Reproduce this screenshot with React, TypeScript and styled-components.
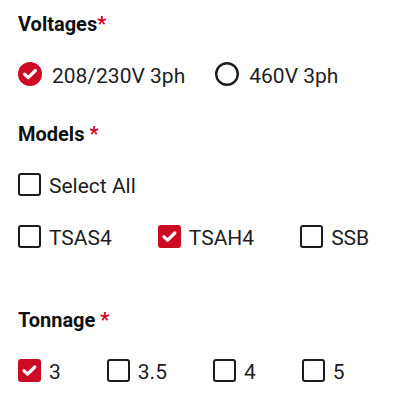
import * as React from "react";
import styled, { createGlobalStyle } from "styled-components";

const voltages = ["208/230V 3ph", "460V 3ph"];
const models = ["TSAS4", "TSAH4", "SSB"];
const tonnages = ["3", "3.5", "4", "5"];

const RadioIcon = ({ checked }: { checked: boolean }) =>
  checked ? (
    <svg width="24" height="24" viewBox="0 0 24 24">
      <circle cx="12" cy="12" r="12" fill="#cc0a24" />
      <path
        d="M6.6 12.2l3.6 3.5 7.2-7.2"
        fill="none"
        stroke="#fff"
        strokeWidth="3.2"
        strokeLinecap="round"
        strokeLinejoin="round"
      />
    </svg>
  ) : (
    <svg width="24" height="24" viewBox="0 0 24 24">
      <circle cx="12" cy="12" r="10.8" fill="none" stroke="#1c1c1c" strokeWidth="2.4" />
    </svg>
  );

const CheckIcon = () => (
  <svg width="23" height="23" viewBox="0 0 23 23">
    <rect width="23" height="23" rx="3" fill="#cc0a24" />
    <path
      d="M6 11.8l3.6 3.4 7.2-7.2"
      fill="none"
      stroke="#fff"
      strokeWidth="3.2"
      strokeLinecap="round"
      strokeLinejoin="round"
    />
  </svg>
);

const App = () => {
  const [voltage, setVoltage] = React.useState(voltages[0]);
  const [picked, setPicked] = React.useState<string[]>(["TSAH4"]);
  const [tons, setTons] = React.useState<string[]>(["3"]);

  const toggle = (list: string[], set: (v: string[]) => void, value: string) =>
    set(list.includes(value) ? list.filter((v) => v !== value) : [...list, value]);

  const allPicked = models.every((m) => picked.includes(m));

  return (
    <>
      <GlobalStyle />
      <Form>
        <Section>
          <Heading>
            Voltages<Required>*</Required>
          </Heading>
          <Group $gap={30}>
            {voltages.map((v) => (
              <Option key={v} $gap={10} onClick={() => setVoltage(v)}>
                <RadioIcon checked={voltage === v} />
                <Label>{v}</Label>
              </Option>
            ))}
          </Group>
        </Section>

        <Section $spaceAbove={36}>
          <Heading>
            Models <Required>*</Required>
          </Heading>
          <Rows>
            <Group $gap={46}>
              <Option onClick={() => setPicked(allPicked ? [] : [...models])}>
                {allPicked ? <CheckIcon /> : <Box />}
                <Label>Select All</Label>
              </Option>
            </Group>
            <Group $gap={46}>
              {models.map((m) => (
                <Option key={m} onClick={() => toggle(picked, setPicked, m)}>
                  {picked.includes(m) ? <CheckIcon /> : <Box />}
                  <Label>{m}</Label>
                </Option>
              ))}
            </Group>
          </Rows>
        </Section>

        <Section $spaceAbove={60}>
          <Heading>
            Tonnage <Required>*</Required>
          </Heading>
          <Group $gap={46}>
            {tonnages.map((t) => (
              <Option key={t} onClick={() => toggle(tons, setTons, t)}>
                {tons.includes(t) ? <CheckIcon /> : <Box />}
                <Label>{t}</Label>
              </Option>
            ))}
          </Group>
        </Section>
      </Form>
    </>
  );
};

const GlobalStyle = createGlobalStyle`
  body {
    margin: 0;
    background: #fff;
    font-family: Roboto, "Liberation Sans", sans-serif;
  }
`;

const Form = styled.form`
  display: flex;
  flex-direction: column;
  padding: 12px 0 0 18px;
`;

const Section = styled.section<{ $spaceAbove?: number }>`
  display: flex;
  flex-direction: column;
  gap: 26px;
  margin-top: ${(p) => p.$spaceAbove ?? 0}px;
`;

const Heading = styled.h3`
  margin: 0;
  font-size: 20px;
  line-height: 24px;
  font-weight: 700;
  color: #111;
`;

const Required = styled.span`
  color: #d0021b;
`;

const Rows = styled.div`
  display: flex;
  flex-direction: column;
  gap: 28px;
`;

const Group = styled.div<{ $gap: number }>`
  display: flex;
  align-items: center;
  gap: ${(p) => p.$gap}px;
`;

const Option = styled.label<{ $gap?: number }>`
  display: flex;
  align-items: center;
  gap: ${(p) => p.$gap ?? 8}px;
  height: 24px;
  cursor: pointer;

  svg {
    flex: none;
  }
`;

const Box = styled.span`
  width: 23px;
  height: 23px;
  box-sizing: border-box;
  border: 2.5px solid #1c1c1c;
  border-radius: 3px;
  flex: none;
`;

const Label = styled.span`
  font-size: 21px;
  line-height: 24px;
  padding-top: 3px;
  color: #1e1e1e;
`;

export default App;
